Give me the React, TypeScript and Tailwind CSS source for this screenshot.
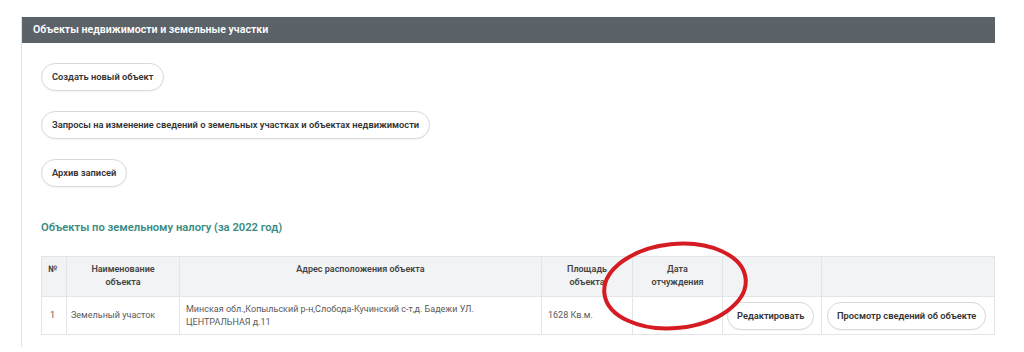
import React from "react";

const font = { fontFamily: "Roboto, 'Noto Sans', 'Liberation Sans', sans-serif" };

function Pill({ children, className = "" }: { children: React.ReactNode; className?: string }) {
  return (
    <button
      className={
        "h-[28px] rounded-full border border-[#d9d9d9] bg-white text-[9.3px] font-semibold text-[#333] whitespace-nowrap shadow-[0_1px_1px_rgba(0,0,0,0.04)] " +
        className
      }
    >
      {children}
    </button>
  );
}

export default function App() {
  const th = "border border-[#e3e5e8] bg-[#f2f3f5] text-[9px] font-semibold text-[#444] leading-[13px] align-top pt-[6px]";
  const td = "border border-[#e3e5e8] text-[9px] text-[#5a5a5a] leading-[13px] align-middle";
  return (
    <div className="relative w-[1024px] h-[352px] bg-white overflow-hidden pt-[17px] pl-[21px]" style={font}>
      <div className="w-[974px] h-[330px] border-l border-[#e2e2e2]">
        <div className="h-[26px] bg-[#5b6268] flex items-center px-[11px] text-white text-[10.6px] font-semibold">
          Объекты недвижимости и земельные участки
        </div>
        <div className="pl-[19px] pt-[20px]">
          <div className="flex flex-col items-start gap-[20px]">
            <Pill className="px-[10px]">Создать новый объект</Pill>
            <Pill className="px-[10px]">Запросы на изменение сведений о земельных участках и объектах недвижимости</Pill>
            <Pill className="px-[10px]">Архив записей</Pill>
          </div>
          <div className="mt-[34px] text-[11.2px] font-semibold text-[#3a8c82] leading-[14px]">
            Объекты по земельному налогу (за 2022 год)
          </div>
          <table className="mt-[21px] w-[953px] table-fixed border-collapse">
            <colgroup>
              <col className="w-[25px]" />
              <col className="w-[113px]" />
              <col className="w-[362px]" />
              <col className="w-[91px]" />
              <col className="w-[90px]" />
              <col className="w-[99px]" />
              <col className="w-[173px]" />
            </colgroup>
            <thead>
              <tr className="h-[40px]">
                <th className={th + " text-left pl-[6px]"}>№</th>
                <th className={th + " text-center"}>
                  Наименование
                  <br />
                  объекта
                </th>
                <th className={th + " text-center"}>Адрес расположения объекта</th>
                <th className={th + " text-center"}>
                  Площадь
                  <br />
                  объекта
                </th>
                <th className={th + " text-center"}>
                  Дата
                  <br />
                  отчуждения
                </th>
                <th className={th}></th>
                <th className={th}></th>
              </tr>
            </thead>
            <tbody>
              <tr className="h-[38px]">
                <td className={td + " pl-[8px]"}>1</td>
                <td className={td + " pl-[4px] whitespace-nowrap"}>Земельный участок</td>
                <td className={td + " pl-[6px]"}>
                  Минская обл.,Копыльский р-н,Слобода-Кучинский с-т,д. Бадежи УЛ.
                  <br />
                  ЦЕНТРАЛЬНАЯ д.11
                </td>
                <td className={td + " pl-[6px]"}>1628 Кв.м.</td>
                <td className={td}></td>
                <td className={td + " pl-[4px]"}>
                  <Pill className="px-[9px]">Редактировать</Pill>
                </td>
                <td className={td + " pl-[5px]"}>
                  <Pill className="px-[9px]">Просмотр сведений об объекте</Pill>
                </td>
              </tr>
            </tbody>
          </table>
        </div>
      </div>
      <svg
        className="absolute left-[596px] top-[238px] pointer-events-none"
        width="160"
        height="100"
        viewBox="0 0 160 100"
      >
        <ellipse
          cx="79"
          cy="48"
          rx="71"
          ry="42"
          transform="rotate(-6 79 48)"
          fill="none"
          stroke="#d41c22"
          strokeWidth="4"
        />
      </svg>
    </div>
  );
}
